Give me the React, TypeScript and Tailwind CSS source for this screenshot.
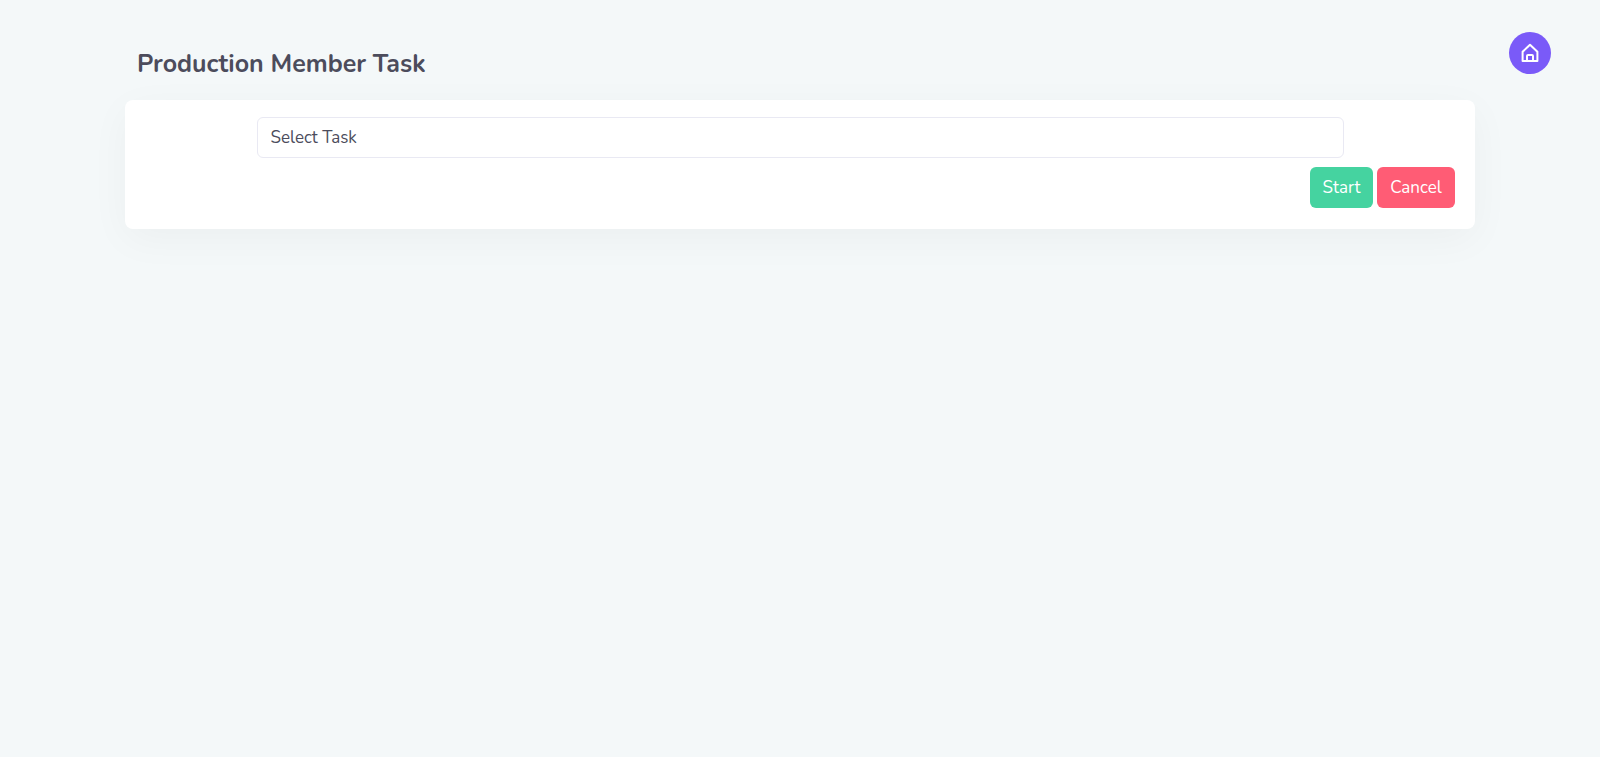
import { useState } from 'react';

export default function App() {
  const [task, setTask] = useState('');

  return (
    <div className="flex min-h-screen items-start bg-[#f4f8f9] font-[Nunito,Lato,sans-serif] text-[17px] text-[#4c4c5c]">
      <div className="w-[125px] shrink-0" />
      <main className="min-w-0 flex-1">
        <h1 className="px-3 pt-12 pb-5 text-[25px] leading-8 font-bold">
          Production Member Task
        </h1>
        <form
          className="rounded-lg bg-white pt-[17px] pb-[21px] shadow-[0_10px_40px_0_rgba(24,28,33,0.04)]"
          onSubmit={(e) => e.preventDefault()}
        >
          <div className="mx-auto w-10/12 px-[19px]">
            <select
              aria-label="Select Task"
              value={task}
              onChange={(e) => setTask(e.target.value)}
              className="block h-[41px] w-full appearance-none rounded-md border border-[#e9e9f3] bg-white px-[13px]"
            >
              <option value="">Select Task</option>
            </select>
          </div>
          <div className="mt-[9px] flex justify-end gap-1 px-5">
            <button
              type="submit"
              className="h-[41px] w-[63px] rounded-md bg-[#45d3a0] text-white hover:bg-[#38c190]"
            >
              Start
            </button>
            <button
              type="button"
              onClick={() => setTask('')}
              className="h-[41px] w-[78px] rounded-md bg-[#ff5c75] text-white hover:bg-[#ee4a64]"
            >
              Cancel
            </button>
          </div>
        </form>
      </main>
      <div className="flex w-[125px] shrink-0 justify-end pt-8 pr-[49px]">
        <a
          href="#home"
          aria-label="Home"
          className="flex size-[42px] items-center justify-center rounded-full bg-[#7a5af8] text-white"
        >
          <svg
            viewBox="0 0 20 20"
            className="size-5"
            fill="none"
            stroke="currentColor"
            strokeWidth="2"
            strokeLinecap="round"
            strokeLinejoin="round"
          >
            <path d="M2.600 8.800V18h14.800V8.800L10 1.800Z" />
            <path d="M7 18v-5a1 1 0 0 1 1-1h4a1 1 0 0 1 1 1V18" />
          </svg>
        </a>
      </div>
    </div>
  );
}
